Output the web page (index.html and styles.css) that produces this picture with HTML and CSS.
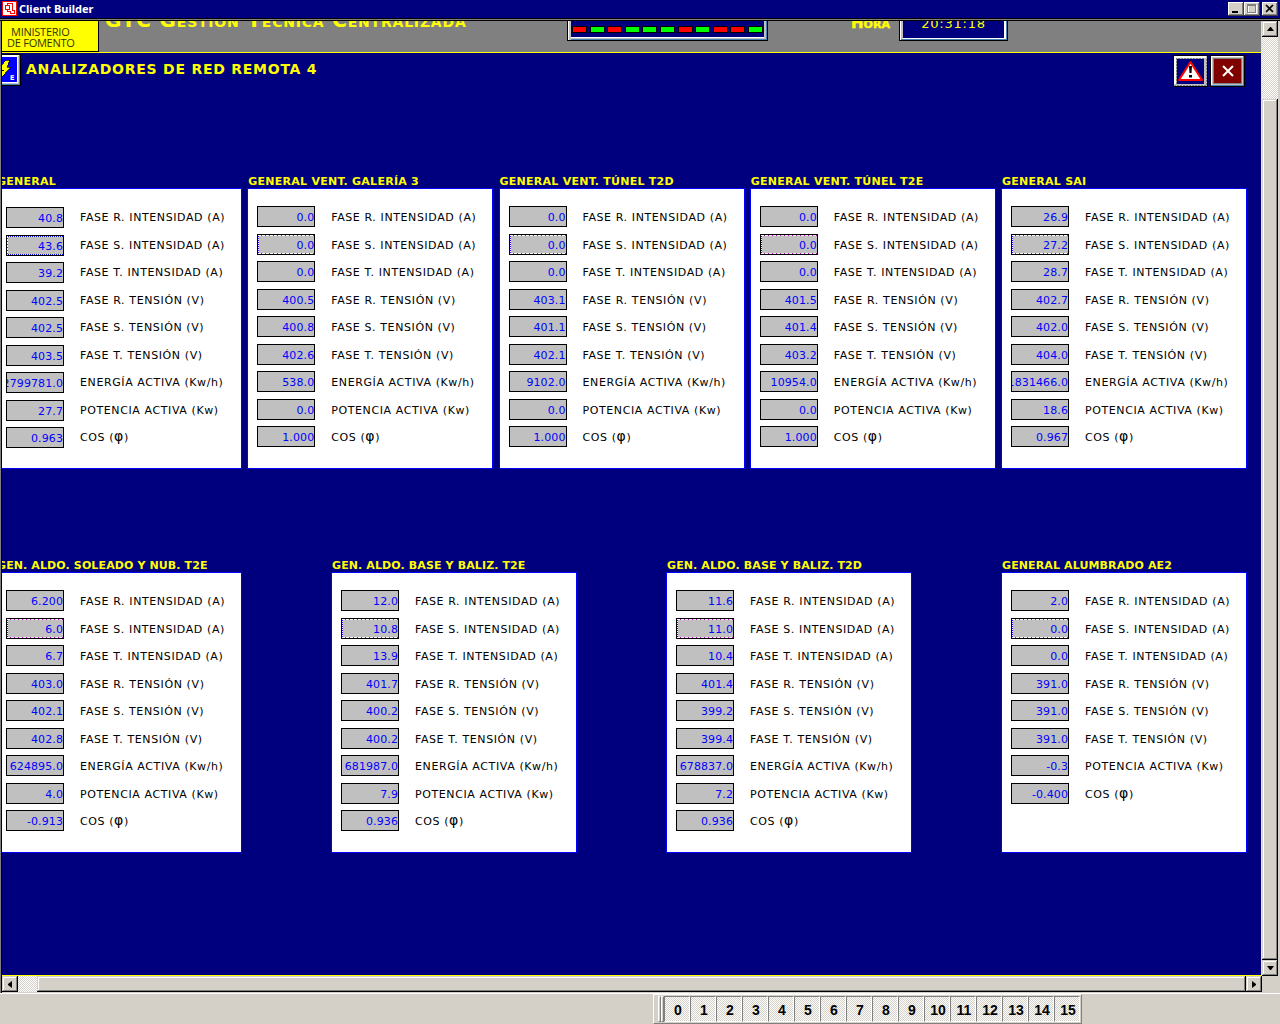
FILE: index.html
```
<!DOCTYPE html>
<html lang="es">
<head>
<meta charset="utf-8">
<title>Client Builder</title>
<link rel="stylesheet" href="styles.css">
</head>
<body>
<div class="window">
  <header class="titlebar">
    <svg class="app-icon" width="15" height="15" viewBox="0 0 15 15" shape-rendering="crispEdges"><path fill="#fff" stroke="#f00" d="M.5.500h14v14H.5z"/><path fill="none" stroke="#f00" d="M3.500 4.500h4v4h-4zM5.500 4V2.500h5v7h2v3h-4v-2h-3V9M8.500 12v-2"/></svg>
    <span class="app-name">Client Builder</span>
    <span class="wbtn"><svg width="16" height="14" viewBox="0 0 16 14"><path d="M4 9h6v2H4z"/></svg></span>
    <span class="wbtn"><svg width="16" height="14" viewBox="0 0 16 14" shape-rendering="crispEdges"><path fill="none" stroke="#fff" d="M4.500 3.500h8v8h-8z"/><path fill="none" stroke="#808080" d="M3.500 2.500h8v8h-8zM3 3.500h9"/></svg></span>
    <span class="wbtn close"><svg width="16" height="14" viewBox="0 0 16 14"><path fill="none" stroke="#000" stroke-width="1.700" d="M4 3l7 7M11 3l-7 7"/></svg></span>
  </header>
  <div class="viewport">
    <div class="canvas">
      <div class="banner">
        <div class="ministry"><span>MINISTERIO</span><span class="m2">DE FOMENTO</span></div>
        <div class="gtc">GTC Gestión Técnica Centralizada</div>
        <div class="leds"><i></i><i class="on"></i><i></i><i class="on"></i><i class="on"></i><i class="on"></i><i></i><i class="on"></i><i></i><i></i><i class="on"></i></div>
        <div class="hour">Hora</div>
        <div class="clock"><span>20:31:18</span></div>
      </div>
      <div class="heading">
        <svg class="bolt" width="19" height="32" viewBox="1 0 19 32" shape-rendering="crispEdges"><path fill="#000" d="M0 0h20v32H0z"/><path fill="#4682b4" d="M0 1h19v30H0z"/><path fill="#fff" d="M0 1h18v29H0z"/><path fill="#c0c0c0" d="M0 2h18v28H0z"/><path fill="#fff" d="M0 2h17v27H0z"/><path fill="#00f" d="M0 3h16v25H0z"/><path fill="#ff0" stroke="#000" stroke-width=".7" d="M5 6h4L6 13h4L0 24v-6l3-2H0v-4z"/><text x="9" y="26" class="bolt-e">E</text></svg>
        <h1>ANALIZADORES DE RED REMOTA 4</h1>
        <svg class="hbtn" width="35" height="32" viewBox="0 0 35 32"><g shape-rendering="crispEdges"><path d="M0 0h35v32H0z"/><path fill="#c0c0c0" d="M1 1h33v30H1z"/><path fill="#fff" d="M1 1h32v2H3v26H1z"/><path fill="#00007f" d="M4 4h27v25H4z"/><path fill="none" stroke="#808080" stroke-dasharray="2 1" d="M3.500 29V3.500H32M33.500 4v26.500H2"/></g><path fill="#fff" stroke="#f00" stroke-width="2" stroke-linejoin="round" d="M17.500 7L29 25H6z"/><path d="M16 11h3l-.5 7h-2zM16 20h3v2.500h-3z"/></svg>
        <svg class="hbtn" width="35" height="32" viewBox="0 0 35 32"><g shape-rendering="crispEdges"><path d="M0 0h35v32H0z"/><path fill="#4682b4" d="M1 1h33v30H1z"/><path fill="#c0c0c0" d="M1 1h32v29H1z"/><path fill="#fff" d="M1 1h32v1H2v28H1z"/><path fill="#808080" d="M3 3h29v26H3z"/><path fill="#800000" d="M4 4h27v24H4z"/></g><path fill="none" stroke="#fff" stroke-width="2" d="M13 11l10 10M23 11L13 21"/></svg>
      </div>
      <div class="row" id="row1"></div>
      <div class="row second" id="row2"></div>
    </div>
    <div class="vscroll">
      <span class="sbtn"><svg width="7" height="4"><path d="M3 0h1l3 4H0z"/></svg></span>
      <span class="track-v"></span>
      <span class="thumb-v"></span>
      <span class="sbtn"><svg width="7" height="4"><path d="M0 0h7L4 4H3z"/></svg></span>
    </div>
    <div class="hscroll">
      <span class="sbtn"><svg width="4" height="7"><path d="M4 0v7L0 4V3z"/></svg></span>
      <span class="track-h"></span>
      <span class="thumb-h"></span>
      <span class="sbtn"><svg width="4" height="7"><path d="M0 0v7l4-3V3z"/></svg></span>
    </div>
  </div>
  <footer class="dock">
    <div class="toolbar" id="toolbar"><b class="grip"></b><b class="grip"></b></div>
  </footer>
</div>
<script src="app.js"></script>
</body>
</html>
```
FILE: styles.css
```
* { box-sizing: border-box; }
body { margin: 0; width: 1280px; height: 1024px; overflow: hidden; background: #d4d0c8; font-family: "DejaVu Sans", sans-serif; }
svg { display: block; flex: none; }
.window { height: 1024px; display: flex; flex-direction: column; }
.titlebar { height: 18px; background: #00007f; display: flex; align-items: flex-start; padding: 1px 2px 0; }
.app-icon { margin-right: 2px; }
.app-name { flex: 1; color: #fff; font: bold 11px/15px "Noto Sans", sans-serif; letter-spacing: 0; }
.wbtn { width: 16px; height: 14px; margin-top: 1px; background: #d4d0c8; box-shadow: inset -1px -1px #404040, inset 1px 1px #fff, inset -2px -2px #808080; }
.wbtn.close { margin-left: 2px; }
.viewport { height: 975px; display: grid; grid-template: 955px 16px / 1260px 16px; padding: 3px 0 0 2px; background: linear-gradient(#000 1px, #808080 1px 2px, #000 2px 3px, transparent 3px), linear-gradient(90deg, #808080 1px, #000 1px 2px, #d4d0c8 2px); }
.canvas { background: #00007f; overflow: hidden; border-right: 1px solid #ff0; border-bottom: 1px solid #ff0; }
.banner { height: 32px; background: #808080; border-bottom: 1px solid #ff0; display: flex; overflow: hidden; align-items: flex-start; color: #ff0; font-weight: bold; white-space: nowrap; }
.ministry { width: 97px; height: 31px; flex: none; background: #ff0; border: solid #000; border-width: 0 1px 1px 0; color: #333300; font: 11px/11px "Open Sans", sans-serif; padding: 5px 0 0 9px; display: flex; flex-direction: column; letter-spacing: -.25px; }
.ministry .m2 { margin-left: -4px; }
.gtc { width: 468px; flex: none; padding-left: 6px; margin-top: -13px; font-size: 20px; line-height: 24px; font-variant: small-caps; letter-spacing: .8px; }
.leds { width: 201px; height: 20px; flex: none; background: #00007f; border: solid #000; border-width: 0 1px 1px; box-shadow: inset 1px 0 #fff, inset 3px 0 #c0c0c0, inset -1px -1px #4682b4, inset -3px -2px #c0c0c0, inset 0 -3px #fff; display: flex; justify-content: space-between; padding: 5px 4px 0; }
.leds i { width: 15px; height: 7px; background: #f00; border: 1px solid #000; }
.leds i.on { background: #0f0; }
.hour { width: 131px; flex: none; padding-left: 83px; margin-top: -8px; font-size: 15px; line-height: 21px; font-variant: small-caps; font-weight: bold; -webkit-text-stroke: .4px #ff0; }
.clock { width: 109px; height: 20px; flex: none; background: #00007f; border: solid #000; border-width: 0 1px 1px; box-shadow: inset 1px 0 #fff, inset -1px -1px #4682b4, inset 3px 0 #c0c0c0, inset -3px -2px #fff; text-align: center; font: 13px/16px "DejaVu Sans", sans-serif; letter-spacing: .75px; }
.clock span { display: block; margin-top: -5px; }
.heading { height: 34px; display: flex; align-items: flex-start; padding: 2px 16px 0 0; }
.heading h1 { flex: 1; margin: 0; padding-left: 5px; color: #ff0; font-size: 14px; line-height: 29px; letter-spacing: .75px; }
.bolt { margin-top: -1px; }
.bolt-e { font: bold 6.500px "DejaVu Sans", sans-serif; fill: #fff; }
.hbtn { margin-left: 2px; }
.row { display: flex; justify-content: space-between; width: 1251px; margin: 86px 0 0 -6px; }
.row.second { margin-top: 88px; }
.meter { width: 246px; }
.meter h2 { margin: 0; padding-left: 1px; height: 15px; color: #ff0; font-size: 11px; line-height: 17px; letter-spacing: .26px; white-space: nowrap; }
.second h2 { letter-spacing: .12px; }
.box { height: 281px; background: #fff; border: 1px solid #00f; padding: 17px 0 0 9px; }
.box.low .value { position: relative; top: 1px; }
.reading { height: 27.5px; display: flex; align-items: flex-start; }
.value { width: 58px; height: 21px; flex: none; border: 1px solid #000; background: #c0c0c0; color: #00f; font-size: 11px; line-height: 21px; letter-spacing: .1px; overflow: hidden; display: flex; justify-content: flex-end; }
.value.focus {
  background:
    repeating-linear-gradient(90deg, #fff 0 3px, #c000c0 3px 4px) 0 0 / 100% 1px no-repeat,
    repeating-linear-gradient(90deg, #fff 0 3px, #c000c0 3px 4px) 0 100% / 100% 1px no-repeat,
    repeating-linear-gradient(#fff 0 1px, #4000ff 1px 2px) 0 0 / 1px 100% no-repeat,
    #c0c0c0;
}
.low .value.focus {
  background:
    repeating-linear-gradient(90deg, #fff 0 1px, #00f 1px 2px) 0 0 / 100% 1px no-repeat,
    repeating-linear-gradient(90deg, #fff 0 1px, #00f 1px 2px) 0 100% / 100% 1px no-repeat,
    repeating-linear-gradient(#fff 0 2px, #c000c0 2px 3px) 0 0 / 1px 100% no-repeat,
    #c0c0c0;
}
.label { margin-left: 16px; font-size: 11px; line-height: 23px; height: 23px; letter-spacing: .6px; white-space: nowrap; color: #000; }
.phi { font-size: 14px; line-height: 1; }
.vscroll { display: flex; flex-direction: column; }
.hscroll { display: flex; }
.sbtn, .thumb-v, .thumb-h { background: #d4d0c8; box-shadow: inset -1px -1px #000, inset 1px 1px #d4d0c8, inset -2px -2px #808080, inset 2px 2px #fff; }
.sbtn { width: 16px; height: 16px; flex: none; display: flex; align-items: center; justify-content: center; }
.track-v, .track-h { background: repeating-conic-gradient(#fff 0 25%, #d4d0c8 0 50%) 0 0 / 2px 2px; }
.track-v { height: 62px; }
.thumb-v { flex: 1; }
.track-h { width: 19px; }
.thumb-h { flex: 1; }
.dock { height: 31px; border-top: 1px solid #fff; background: #d4d0c8; padding-left: 653px; }
.toolbar { width: 429px; height: 30px; display: flex; padding: 1px 0 0 4px; border: 1px solid; border-color: #fff #808080 #808080 #fff; }
.grip { width: 3px; height: 26px; border: 1px solid; border-color: #fff #808080 #808080 #fff; flex: none; }
.key { width: 26px; height: 26px; flex: none; background: repeating-conic-gradient(#fff 0 25%, #d4d0c8 0 50%) 0 0 / 2px 2px; border: 1px solid; border-color: #808080 #fff #fff #808080; font: bold 14px/27px "Liberation Sans", sans-serif; text-align: center; padding-left: 2px; color: #000; }
```
FILE: app.js
```
const labels = ["FASE R. INTENSIDAD (A)", "FASE S. INTENSIDAD (A)", "FASE T. INTENSIDAD (A)", "FASE R. TENSIÓN (V)", "FASE S. TENSIÓN (V)", "FASE T. TENSIÓN (V)", "ENERGÍA ACTIVA (Kw/h)", "POTENCIA ACTIVA (Kw)", 'COS (<span class="phi">φ</span>)'];
const shortLabels = labels.filter((l) => !l.startsWith("ENERG"));
const rows = {
  row1: [
    ["GENERAL", "40.8 43.6 39.2 402.5 402.5 403.5 2799781.0 27.7 0.963"],
    ["GENERAL VENT. GALERÍA 3", "0.0 0.0 0.0 400.5 400.8 402.6 538.0 0.0 1.000"],
    ["GENERAL VENT. TÚNEL T2D", "0.0 0.0 0.0 403.1 401.1 402.1 9102.0 0.0 1.000"],
    ["GENERAL VENT. TÚNEL T2E", "0.0 0.0 0.0 401.5 401.4 403.2 10954.0 0.0 1.000"],
    ["GENERAL SAI", "26.9 27.2 28.7 402.7 402.0 404.0 1831466.0 18.6 0.967"]
  ],
  row2: [
    ["GEN. ALDO. SOLEADO Y NUB. T2E", "6.200 6.0 6.7 403.0 402.1 402.8 624895.0 4.0 -0.913"],
    ["GEN. ALDO. BASE Y BALIZ. T2E", "12.0 10.8 13.9 401.7 400.2 400.2 681987.0 7.9 0.936"],
    ["GEN. ALDO. BASE Y BALIZ. T2D", "11.6 11.0 10.4 401.4 399.2 399.4 678837.0 7.2 0.936"],
    ["GENERAL ALUMBRADO AE2", "2.0 0.0 0.0 391.0 391.0 391.0 -0.3 -0.400"]
  ]
};
for (const [id, meters] of Object.entries(rows)) {
  document.getElementById(id).innerHTML = meters.map(([title, list]) => {
    const values = list.split(" ");
    const names = values.length === 9 ? labels : shortLabels;
    return `<section class="meter"><h2>${title}</h2><div class="box${title === "GENERAL" ? " low" : ""}">` +
      values.map((v, i) => `<div class="reading"><span class="value${i === 1 ? " focus" : ""}"><span>${v}</span></span><span class="label">${names[i]}</span></div>`).join("") +
      "</div></section>";
  }).join("");
}
document.getElementById("toolbar").insertAdjacentHTML("beforeend",
  Array.from({ length: 16 }, (_, n) => `<span class="key">${n}</span>`).join(""));
```
